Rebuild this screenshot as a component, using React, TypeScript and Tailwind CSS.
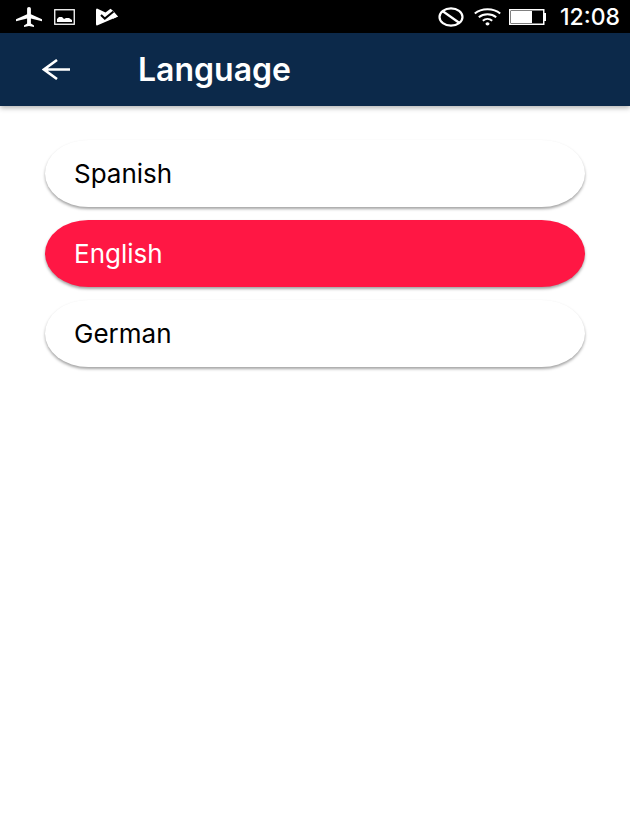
import { useState } from "react";

const languages = ["Spanish", "English", "German"];

function StatusBar() {
  return (
    <div className="flex h-[33px] items-center justify-between bg-black pl-4 pr-[10px] text-white">
      <div className="flex items-center">
        <svg width="26" height="20" viewBox="0 0 26 20" fill="currentColor" aria-hidden="true">
          <path d="M13 0c1.3 0 1.9.9 1.9 2v5.2L26 12.3v2l-11.1-2.7v5l3.1 1.8V20l-5-1.1L8 20v-1.6l3.1-1.8v-5L0 14.3v-2l11.1-5.1V2c0-1.1.6-2 1.9-2z" />
        </svg>
        <svg className="ml-3" width="21" height="16" viewBox="0 0 21 16" aria-hidden="true">
          <rect x=".75" y=".75" width="19.5" height="14.5" fill="none" stroke="currentColor" strokeWidth="1.3" />
          <path d="M3 13v-3l2-2h3l2 2 2-1h3l3 2v2z" fill="currentColor" />
        </svg>
        <svg className="ml-[21px]" width="22" height="18" viewBox="0 0 22 18" aria-hidden="true">
          <path d="M1 .5 9.500 4.600 14.500 .8 17 2.800 22 8.500 1 17.500Q0 17.500 0 16V2Q0 .5 1 .5z" fill="currentColor" />
          <path d="m5 7 3.800 3.600 8.700-7.100" fill="none" stroke="black" strokeWidth="2" />
          <path d="m17 5.500 5 3-5 2.200z" fill="currentColor" />
        </svg>
      </div>
      <div className="flex items-center">
        <svg width="26" height="20" viewBox="0 0 26 20" fill="none" stroke="currentColor" strokeWidth="2.2" aria-hidden="true">
          <ellipse cx="13" cy="10" rx="11.5" ry="8.700" />
          <path d="m4.500 4 17 12" />
        </svg>
        <svg className="ml-[10px]" width="27" height="18" viewBox="0 0 27 18" fill="none" stroke="currentColor" strokeWidth="2" aria-hidden="true">
          <path d="M.8 5.500C7.500-.2 19.500-.2 26.200 5.500M4.800 9.200c4.700-4 12.700-4 17.400 0M8.800 12.700c2.700-2.200 6.700-2.200 9.400 0" />
          <ellipse cx="13.5" cy="15.800" rx="2" ry="1.600" fill="currentColor" stroke="none" />
        </svg>
        <svg className="ml-2" width="38" height="16" viewBox="0 0 38 16" aria-hidden="true">
          <rect x=".75" y=".75" width="34" height="14.5" fill="none" stroke="currentColor" strokeWidth="1.5" />
          <path d="M2 2h21v12H2zM35 4h2v8h-2z" fill="currentColor" />
        </svg>
        <time className="ml-[11px] w-[62px] text-right font-[Inter,Roboto,sans-serif] text-[23px] font-medium leading-6">12:08</time>
      </div>
    </div>
  );
}

export default function App() {
  const [selected, setSelected] = useState("English");
  return (
    <div className="min-h-screen bg-white font-[Inter,Roboto,sans-serif]">
      <StatusBar />
      <header className="flex h-[73px] items-center bg-[#0c294a] pl-[42px] text-white shadow-[0_2px_5px_rgba(0,0,0,0.3)]">
        <button type="button" aria-label="Back" className="flex w-24 items-center">
          <svg width="28" height="21" viewBox="0 0 28 21" fill="none" stroke="currentColor" strokeWidth="2.600" aria-hidden="true">
            <path d="M28 10.500H2M15 1 2 10.500 15 20" />
          </svg>
        </button>
        <h1 className="text-[32px] font-semibold leading-8">Language</h1>
      </header>
      <main className="flex flex-col gap-[13px] px-[45px] pt-[34px]">
        {languages.map((name) => (
          <button
            key={name}
            type="button"
            aria-pressed={selected === name}
            onClick={() => setSelected(name)}
            className={`h-[67px] rounded-[44px/34px] px-[29px] text-left text-[26px] leading-7 shadow-[0_2px_3px_rgba(0,0,0,0.36)] ${
              selected === name ? "bg-[#ff1744] text-white" : "bg-white text-black"
            }`}
          >
            {name}
          </button>
        ))}
      </main>
    </div>
  );
}
